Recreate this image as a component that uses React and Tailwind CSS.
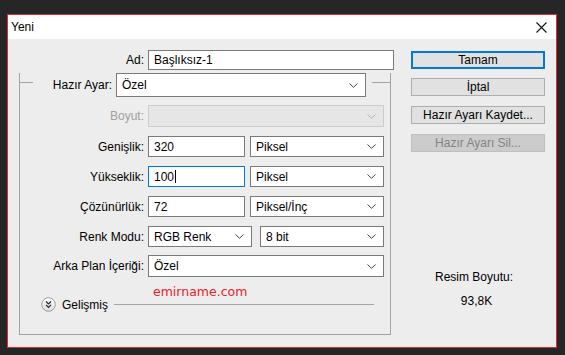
import React from "react";

const Chevron = ({ color = "#444" }) => (
  <svg width="9" height="5" viewBox="0 0 9 5" className="shrink-0">
    <polyline points="0.5,0.5 4.5,4.3 8.5,0.5" fill="none" stroke={color} strokeWidth="1" />
  </svg>
);

const Input = ({ w, value, focused, caret }) => (
  <div
    className={`flex h-[21px] items-center bg-white pl-[5px] text-[12px] text-black border ${
      focused ? "border-[#0078d7]" : "border-[#7a7a7a]"
    }`}
    style={{ width: w }}
  >
    <span>{value}</span>
    {caret && <span className="ml-px h-[13px] w-px bg-black" />}
  </div>
);

const Select = ({ w, h = 21, value, disabled }) => (
  <div
    className={`flex items-center justify-between pl-[5px] pr-[7px] text-[12px] border ${
      disabled ? "border-[#cccccc] bg-[#e6e6e6]" : "border-[#7a7a7a] bg-white text-black"
    }`}
    style={{ width: w, height: h }}
  >
    <span>{value}</span>
    <Chevron color={disabled ? "#b5b5b5" : "#444"} />
  </div>
);

const Row = ({ label, disabled, children, mt }) => (
  <div className={`flex items-center ${mt}`}>
    <div className={`w-[124px] text-right text-[12px] ${disabled ? "text-[#a0a0a0]" : "text-black"}`}>{label}</div>
    <div className="ml-[4px] flex items-center">{children}</div>
  </div>
);

const Button = ({ children, primary, disabled, mt }) => (
  <div
    className={`flex h-[18px] w-[134px] items-center justify-center text-[12px] ${mt} ${
      primary
        ? "border-2 border-[#0078d7] bg-[#e1e1e1] text-black"
        : disabled
        ? "border border-[#bfbfbf] bg-[#cccccc] text-[#838383]"
        : "border border-[#adadad] bg-[#e1e1e1] text-black"
    }`}
  >
    {children}
  </div>
);

export default function App() {
  return (
    <div className="h-[355px] w-[565px] overflow-hidden bg-[#262626] pl-[7px] pt-[14px] font-['Liberation_Sans',Arial,sans-serif]">
      <div className="flex h-[334px] w-[550px] flex-col border border-[#dc2f3a] bg-[#ededed]">
        {/* title bar */}
        <div className="flex h-[24px] shrink-0 items-center justify-between bg-white pl-[3px] pr-[9px]">
          <span className="text-[12px] text-black">Yeni</span>
          <svg width="11" height="11" viewBox="0 0 11 11">
            <path d="M0.5 0.5 L10.5 10.5 M10.5 0.5 L0.5 10.5" stroke="#111" strokeWidth="1.1" />
          </svg>
        </div>

        <div className="flex flex-1">
          {/* left */}
          <div className="w-[388px] pt-[11px]">
            <div className="flex items-center">
              <div className="w-[136px] text-right text-[12px] text-black">Ad:</div>
              <div className="ml-[4px] flex h-[20px] w-[246px] items-center border border-[#7a7a7a] bg-white pl-[5px] text-[12px] text-black">
                Başlıksız-1
              </div>
            </div>

            {/* group box */}
            <div className="ml-[11px] mt-[12px] w-[372px] border-x border-b border-[#a3a3a3] pb-[22px]">
              <div className="-mt-[9px] flex items-start">
                <div className="mt-[9px] w-[13px] border-t border-[#a3a3a3]" />
                <div className="flex h-[24px] w-[79px] items-center justify-end text-[12px] text-black">Hazır Ayar:</div>
                <div className="ml-[4px]">
                  <Select w={250} h={24} value="Özel" />
                </div>
                <div className="ml-[6px] mt-[9px] flex-1 border-t border-[#a3a3a3]" />
              </div>

              <Row label="Boyut:" disabled mt="mt-[8px]">
                <Select w={236} h={22} value="" disabled />
              </Row>
              <Row label="Genişlik:" mt="mt-[9px]">
                <Input w={97} value="320" />
                <div className="ml-[5px]">
                  <Select w={134} value="Piksel" />
                </div>
              </Row>
              <Row label="Yükseklik:" mt="mt-[9px]">
                <Input w={97} value="100" focused caret />
                <div className="ml-[5px]">
                  <Select w={134} value="Piksel" />
                </div>
              </Row>
              <Row label="Çözünürlük:" mt="mt-[9px]">
                <Input w={97} value="72" />
                <div className="ml-[5px]">
                  <Select w={134} value="Piksel/İnç" />
                </div>
              </Row>
              <Row label="Renk Modu:" mt="mt-[9px]">
                <Select w={104} value="RGB Renk" />
                <div className="ml-[8px]">
                  <Select w={124} value="8 bit" />
                </div>
              </Row>
              <Row label="Arka Plan İçeriği:" mt="mt-[8px]">
                <Select w={236} h={22} value="Özel" />
              </Row>

              <div className="ml-[133px] mt-[9px] h-[12px] font-['DejaVu_Sans',sans-serif] text-[12.5px] leading-[12px] text-[#e8202a]">
                emirname.com
              </div>

              <div className="mt-[-1px] flex h-[15px] items-center">
                <svg width="15" height="15" viewBox="0 0 15 15" className="ml-[21px] shrink-0">
                  <defs>
                    <linearGradient id="g" x1="0" y1="0" x2="0" y2="1">
                      <stop offset="0" stopColor="#ffffff" />
                      <stop offset="1" stopColor="#dcdcdc" />
                    </linearGradient>
                  </defs>
                  <circle cx="7.5" cy="7.5" r="6.8" fill="url(#g)" stroke="#9b9b9b" strokeWidth="1" />
                  <polyline points="5,4.5 7.5,7 10,4.5" fill="none" stroke="#222" strokeWidth="1.2" />
                  <polyline points="5,7.8 7.5,10.3 10,7.8" fill="none" stroke="#222" strokeWidth="1.2" />
                </svg>
                <span className="ml-[6px] text-[12px] text-black">Gelişmiş</span>
                <div className="ml-[6px] mr-[16px] flex-1 border-t border-[#a3a3a3]" />
              </div>
            </div>
          </div>

          {/* right */}
          <div className="ml-[15px] flex w-[134px] flex-col pt-[12px]">
            <Button primary>Tamam</Button>
            <Button mt="mt-[9px]">İptal</Button>
            <Button mt="mt-[10px]">Hazır Ayarı Kaydet...</Button>
            <Button mt="mt-[10px]" disabled>Hazır Ayarı Sil...</Button>
            <div className="mt-[118px] h-[14px] pr-[8px] text-center text-[12px] leading-[14px] text-black">Resim Boyutu:</div>
            <div className="mt-[10px] h-[14px] pr-[3px] text-center text-[12px] leading-[14px] text-black">93,8K</div>
          </div>
        </div>
      </div>
    </div>
  );
}
